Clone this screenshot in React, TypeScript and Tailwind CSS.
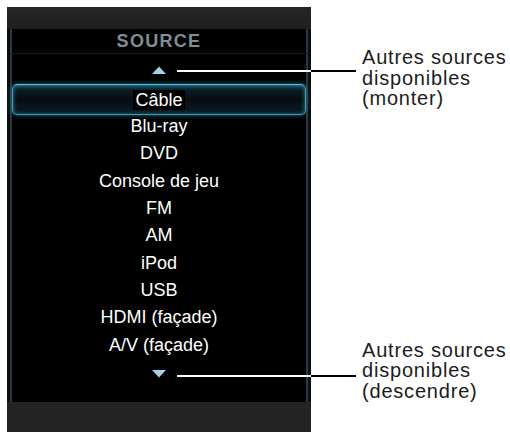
const sources = [
  "Câble",
  "Blu-ray",
  "DVD",
  "Console de jeu",
  "FM",
  "AM",
  "iPod",
  "USB",
  "HDMI (façade)",
  "A/V (façade)",
];

function Arrow({ down }: { down?: boolean }) {
  return (
    <svg width="16" height="9" viewBox="0 0 16 9" className="block">
      {down ? (
        <polygon points="1,1 15,1 8,8.5" fill="#a9d0e2" />
      ) : (
        <polygon points="8,0.5 15,8 1,8" fill="#a9d0e2" />
      )}
    </svg>
  );
}

export default function App() {
  return (
    <div className="relative flex w-[510px] h-[432px] bg-white overflow-hidden font-['Liberation_Sans',Arial,sans-serif]">
      {/* panel */}
      <div className="ml-[7px] mt-[7px] w-[304px] flex flex-col">
        <div className="h-[22px] bg-gradient-to-b from-[#262626] to-[#1f1f1f]" />
        <div className="h-[373px] flex flex-col bg-black border-x-[3px] border-[#0b0e10] shadow-[inset_2px_0_0_#2c3840,inset_-2px_0_0_#2c3840]">
          <div className="h-[25px] flex items-center justify-center border-b border-[#151b20] text-[18px] font-bold tracking-[1.3px] text-[#7f8f99]">
            SOURCE
          </div>
          <div className="h-[32px] flex items-center justify-center">
            <Arrow />
          </div>
          <div className="flex flex-col px-[2px]">
            {sources.map((s, i) =>
              i === 0 ? (
                <div
                  key={s}
                  className="h-[31px] -my-[2px] flex items-center justify-center rounded-[5px] border border-[#3f9db6] border-t-[#5fc0d8] bg-gradient-to-b from-[#0d2430] via-[#060d12] to-[#0b1e28] shadow-[0_0_5px_#1f6f86,inset_0_1px_4px_#2a8aa3]"
                >
                  <span className="bg-black px-[2px] text-[18px] leading-[20px] text-white">{s}</span>
                </div>
              ) : (
                <div key={s} className="h-[27.33px] flex items-center justify-center text-[18px] text-white">
                  {s}
                </div>
              )
            )}
          </div>
          <div className="h-[30px] flex items-center justify-center">
            <Arrow down />
          </div>
        </div>
        <div className="flex-1 bg-[#232323]" />
      </div>

      {/* callout lines: white over the panel, black outside */}
      <div className="absolute left-[177px] top-[70px] w-[134px] h-[2px] bg-white" />
      <div className="absolute left-[311px] top-[70px] w-[45px] h-[2px] bg-black" />
      <div className="absolute left-[177px] top-[375px] w-[134px] h-[2px] bg-white" />
      <div className="absolute left-[311px] top-[375px] w-[45px] h-[2px] bg-black" />

      {/* annotations */}
      <div className="ml-[51px] flex flex-col text-[20px] leading-[20.5px] text-[#1c1c1c] tracking-[0.8px]">
        <div className="mt-[47px]">
          Autres sources
          <br />
          disponibles
          <br />
          (monter)
        </div>
        <div className="mt-[231px]">
          Autres sources
          <br />
          disponibles
          <br />
          (descendre)
        </div>
      </div>
    </div>
  );
}
